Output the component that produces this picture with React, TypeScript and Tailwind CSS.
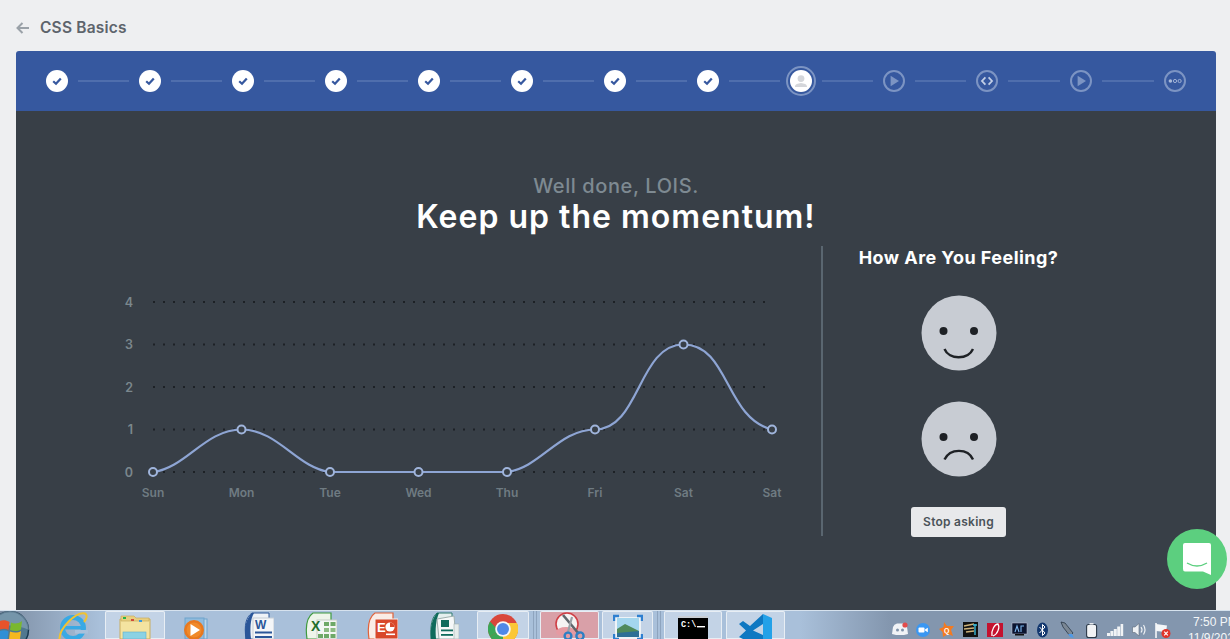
import React from "react";

const font = "font-['Inter','Liberation_Sans',sans-serif]";

function Check() {
  return (
    <div className="w-[22px] h-[22px] rounded-full bg-white flex items-center justify-center shrink-0">
      <svg width="12" height="12" viewBox="0 0 12 12">
        <path d="M2.2 6.2 L5 8.8 L9.8 3.4" fill="none" stroke="#36589f" strokeWidth="2.2" />
      </svg>
    </div>
  );
}

function Outline({ children }: { children: React.ReactNode }) {
  return (
    <div className="w-[22px] h-[22px] rounded-full border-2 border-[#7c94c3] flex items-center justify-center shrink-0">
      <svg width="18" height="18" viewBox="0 0 18 18">{children}</svg>
    </div>
  );
}

function Line() {
  return <div className="w-[51px] shrink-0 h-[2px] mx-[10px] bg-[#4f6ead]" />;
}

function FlexLine() {
  return <div className="flex-1 h-[2px] mx-[10px] bg-[#4f6ead]" />;
}

function Stepper() {
  return (
    <div className="h-[60px] bg-[#36589f] rounded-t-[3px] px-[30px] flex items-center">
      {Array.from({ length: 8 }).map((_, i) => (
        <React.Fragment key={i}>
          <Check />
          <Line />
        </React.Fragment>
      ))}
      <div className="relative w-[22px] h-[22px] rounded-full bg-white flex items-center justify-center shrink-0 outline-2 outline-offset-[2px] outline-[#7c94c3]">
        <svg width="16" height="16" viewBox="0 0 16 16">
          <circle cx="8" cy="5.6" r="3.4" fill="#d4d6da" />
          <path d="M2 14 C2 10.6 5 10.6 8 10 C11 10.6 14 10.6 14 14 Z" fill="#d4d6da" />
        </svg>
      </div>
      <Line />
      <Outline>
        <path d="M5.6 3.8 L14 9 L5.6 14.2 Z" fill="#7c94c3" />
      </Outline>
      <Line />
      <Outline>
        <path d="M7.4 5.4 L4 9 L7.4 12.6 M10.6 5.4 L14 9 L10.6 12.6" fill="none" stroke="#c3cfe6" strokeWidth="1.8" />
      </Outline>
      <FlexLine />
      <Outline>
        <path d="M5.6 3.8 L14 9 L5.6 14.2 Z" fill="#7c94c3" />
      </Outline>
      <FlexLine />
      <Outline>
        <circle cx="4.4" cy="9" r="1.8" fill="#a9b9d9" />
        <circle cx="9" cy="9" r="1.6" fill="none" stroke="#a9b9d9" strokeWidth="0.9" />
        <circle cx="13.6" cy="9" r="1.6" fill="none" stroke="#a9b9d9" strokeWidth="0.9" />
      </Outline>
    </div>
  );
}

const xs = [153, 241.5, 330, 418.5, 507, 595, 683.5, 772];
const ys = [472, 429.5, 472, 472, 472, 429.5, 344.5, 429.5];
const days = ["Sun", "Mon", "Tue", "Wed", "Thu", "Fri", "Sat", "Sat"];

function Chart() {
  const ox = 112;
  const oy = 282;
  const grid = [302, 344.5, 387, 429.5, 472];
  return (
    <svg width="689" height="230" viewBox={`${ox} ${oy} 689 230`} className="block">
      {grid.map((y) => (
        <line key={y} x1="153" x2="767" y1={y} y2={y} stroke="#1d2126" strokeWidth="2" strokeDasharray="2 8" />
      ))}
      {[4, 3, 2, 1, 0].map((n, i) => (
        <text key={n} x="133" y={grid[i] + 4.5} textAnchor="end" fontSize="12.5" fontWeight="600" fill="#7b878d">
          {n}
        </text>
      ))}
      {days.map((d, i) => (
        <text key={i} x={xs[i]} y="497" textAnchor="middle" fontSize="12" fontWeight="600" fill="#6f7b82">
          {d}
        </text>
      ))}
      <path
        d="M153 472 C 186 468 205 429.5 241.5 429.5 C 278 429.5 297 468 330 472 L 507 472 C 540 468 559 429.5 595 429.5 C 640 429.5 638 344.5 683.5 344.5 C 729 344.5 725 418 772 429.5"
        fill="none"
        stroke="#8ea5d4"
        strokeWidth="2.2"
      />
      {xs.map((x, i) => (
        <circle key={i} cx={x} cy={ys[i]} r="4" fill="#383f47" stroke="#a0b5dc" strokeWidth="2" />
      ))}
    </svg>
  );
}

function Face({ happy }: { happy: boolean }) {
  return (
    <svg width="76" height="76" viewBox="0 0 76 76" className="block">
      <circle cx="38" cy="38" r="37.5" fill="#c8ccd3" />
      <circle cx="22.5" cy="36" r="4" fill="#1e2125" />
      <circle cx="53" cy="36" r="4" fill="#1e2125" />
      {happy ? (
        <path d="M23.5 54 C 28 65 47 65 52 54" fill="none" stroke="#1e2125" strokeWidth="2.4" />
      ) : (
        <path d="M23.5 58.5 C 29 47 47 47 52 58.5" fill="none" stroke="#1e2125" strokeWidth="2.4" />
      )}
    </svg>
  );
}

function Feeling() {
  return (
    <div className="w-[269px] pt-[1px] flex flex-col items-center">
      <h2 className="text-[18px] leading-[22px] font-bold text-white whitespace-nowrap tracking-[0.45px]">How Are You Feeling?</h2>
      <div className="mt-[26px] flex flex-col items-center gap-[30px]">
        <Face happy />
        <Face happy={false} />
      </div>
      <button className="mt-[30px] w-[95px] h-[30px] bg-[#e8e9eb] rounded-[3px] text-[12px] font-semibold tracking-[0.25px] text-[#4b5359]">
        Stop asking
      </button>
    </div>
  );
}

/* Taskbar icons: in every icon, y = 0 is page y 611 */

function Start() {
  return (
    <svg width="30" height="28" viewBox="0 0 30 28" className="block">
      <circle cx="10" cy="19" r="18.5" fill="#50788f" stroke="#17384f" strokeWidth="1.4" />
      <path d="M-9 19 A19 19 0 0 1 29 19 Q10 10 -9 19 Z" fill="#8ea9bd" opacity="0.6" />
      <path d="M0 10 C3 9 6 9 9.5 11 L8.5 19 C6 17.5 3 17.5 0 18.5 Z" fill="#e8532b" />
      <path d="M11 11.5 C14 13 18 13 22 10 L21 18.5 C18 20.5 14 20.5 10 19 Z" fill="#7ab82f" />
      <path d="M0 20 C3 19 6 19 8.5 20.5 L7.5 28 L0 28 Z" fill="#2e8fd6" />
      <path d="M10 20.5 C14 22 18 22 21 20 L20 28 L9 28 Z" fill="#f5b81f" />
    </svg>
  );
}

function IE() {
  return (
    <svg width="30" height="28" viewBox="0 0 30 28" className="block">
      <circle cx="15" cy="17" r="10.5" fill="none" stroke="#39a9e4" strokeWidth="5" />
      <rect x="5" y="15" width="21" height="3.4" fill="#39a9e4" />
      <rect x="17" y="19" width="13" height="3.6" fill="#a9c0da" />
      <path d="M1.5 28 C 1 18 18 0 27 2.5 C 30 4 28.5 8 26 11" fill="none" stroke="#f1c232" strokeWidth="2" />
    </svg>
  );
}

function Folder() {
  return (
    <svg width="32" height="28" viewBox="0 0 32 28" className="block">
      <path d="M1 8 L1 28 L31 28 L31 8 Z" fill="#f4e3a0" stroke="#c9ad60" />
      <path d="M2 5 L15 5 L17 7 L30 7 L30 10 L2 10 Z" fill="#e8cf80" stroke="#c9ad60" strokeWidth="0.7" />
      <rect x="4" y="6" width="3" height="2" fill="#27b34b" />
      <rect x="12" y="8" width="3" height="2" fill="#d24a3a" />
      <rect x="20" y="9" width="3" height="2" fill="#3b9ae0" />
      <rect x="4" y="21" width="23" height="7" fill="#8bd2e4" stroke="#5fb0cc" strokeWidth="0.6" />
    </svg>
  );
}

function Media() {
  return (
    <svg width="25" height="28" viewBox="0 0 25 28" className="block">
      <rect x="7" y="8" width="17" height="20" fill="#bcd6ea" stroke="#6fa3cc" />
      <rect x="2" y="7" width="19" height="21" fill="#8fbbdd" stroke="#6fa3cc" />
      <circle cx="11" cy="19" r="10" fill="#e8781e" />
      <circle cx="11" cy="19" r="7.5" fill="#f08a2a" />
      <path d="M7.5 13 L17 19 L7.5 25 Z" fill="#fff" />
    </svg>
  );
}

function Word() {
  return (
    <svg width="30" height="28" viewBox="0 0 30 28" className="block">
      <path d="M2 28 C0 14 2 6 8 2 L25 2 L25 28 Z" fill="#eef2f7" stroke="#2a5699" strokeWidth="1" />
      <path d="M1.5 28 C0 16 2 8 8 2 L10 2 C6 9 6 18 7 28 Z" fill="#2a5699" />
      <rect x="9" y="7" width="21" height="21" fill="#f4f6f8" stroke="#c5cdd5" />
      <text x="11" y="18" fontSize="12" fontWeight="800" fill="#2a5699" fontFamily="Liberation Sans">W</text>
      <rect x="11" y="20.5" width="17" height="2" fill="#2a5699" />
      <rect x="11" y="25" width="17" height="2" fill="#2a5699" />
    </svg>
  );
}

function Excel() {
  return (
    <svg width="32" height="28" viewBox="0 0 32 28" className="block">
      <path d="M2 28 C0 14 2 6 8 2 L26 2 L26 28 Z" fill="#eef5ea" stroke="#3f9a3f" strokeWidth="1.2" />
      <rect x="12" y="9" width="20" height="19" fill="#f4f6f4" stroke="#c5cdc5" />
      <text x="6" y="20" fontSize="14" fontWeight="800" fill="#1f6e2d" fontFamily="Liberation Sans">X</text>
      <rect x="19" y="11" width="5" height="4" fill="#6ea867" />
      <rect x="25.5" y="11" width="5" height="4" fill="#6ea867" />
      <rect x="19" y="17" width="5" height="4" fill="#8dbb83" />
      <rect x="25.5" y="17" width="5" height="4" fill="#8dbb83" />
      <rect x="13" y="23" width="5" height="4" fill="#6ea867" />
      <rect x="19" y="23" width="5" height="4" fill="#6ea867" />
      <rect x="25.5" y="23" width="5" height="4" fill="#6ea867" />
    </svg>
  );
}

function Ppt() {
  return (
    <svg width="31" height="28" viewBox="0 0 31 28" className="block">
      <path d="M2 28 C0 14 2 6 8 2 L26 2 L26 28 Z" fill="#faece6" stroke="#e0623a" strokeWidth="1.2" />
      <rect x="8" y="8" width="23" height="20" fill="#d9482a" stroke="#f4f0ee" />
      <text x="10" y="21" fontSize="13" fontWeight="800" fill="#fff" fontFamily="Liberation Sans">E</text>
      <circle cx="23" cy="16" r="4.6" fill="#fff" />
      <path d="M23 16 L23 11.4 A4.6 4.6 0 0 1 27.6 16 Z" fill="#d9482a" />
      <rect x="19" y="22.5" width="9" height="1.6" fill="#fff" />
    </svg>
  );
}

function Pub() {
  return (
    <svg width="29" height="28" viewBox="0 0 29 28" className="block">
      <path d="M1 28 C0 14 2 6 7 2 L22 2 L22 28 Z" fill="#e5efee" stroke="#2f7a6e" strokeWidth="1" />
      <path d="M1 28 C0 16 2 8 7 2 L9 2 C6 9 5 18 6 28 Z" fill="#0f6b5c" />
      <path d="M7 8 L24 5 L26 28 L9 28 Z" fill="#f6f8f8" stroke="#9fb0ae" />
      <rect x="11" y="9" width="8" height="7" fill="#0f6b5c" />
      <rect x="11" y="18.5" width="12" height="1.8" fill="#0f6b5c" />
      <rect x="11" y="23" width="12" height="1.8" fill="#0f6b5c" />
      <rect x="24" y="13" width="5" height="15" fill="#e6eceb" stroke="#9fb0ae" strokeWidth="0.6" />
    </svg>
  );
}

function Chrome() {
  return (
    <svg width="30" height="28" viewBox="0 0 30 28" className="block">
      <circle cx="15" cy="18" r="15" fill="#d9473b" />
      <path d="M15 18 L2 25.5 A15 15 0 0 1 2 10.5 L9 18 Z" fill="#3aa757" />
      <path d="M15 18 L2 25.5 A15 15 0 0 0 15 33 Z" fill="#3aa757" />
      <path d="M15 18 L15 33 A15 15 0 0 0 29 12 L15 12 Z" fill="#fbc735" />
      <circle cx="15" cy="18" r="7.8" fill="#f4f6f8" />
      <circle cx="15" cy="18" r="6" fill="#4e89e8" />
    </svg>
  );
}

function Snip() {
  return (
    <svg width="30" height="28" viewBox="0 0 30 28" className="block">
      <ellipse cx="12" cy="13" rx="11" ry="11" fill="#f5f3f3" stroke="#cf3f46" strokeWidth="1.6" />
      <ellipse cx="11" cy="21" rx="10" ry="5" fill="#e59aa2" />
      <path d="M8 4 L24 23" stroke="#5f656b" strokeWidth="2.6" />
      <path d="M17 6 L13 21" stroke="#9aa0a6" strokeWidth="2.2" />
      <circle cx="25" cy="25" r="3.6" fill="none" stroke="#2d7fc4" strokeWidth="2.4" />
      <circle cx="13" cy="25" r="3.4" fill="none" stroke="#2d7fc4" strokeWidth="2.4" />
    </svg>
  );
}

function Pics() {
  return (
    <svg width="30" height="28" viewBox="0 0 30 28" className="block">
      <rect x="2" y="6" width="26" height="22" fill="#eef3f7" />
      <rect x="4" y="7" width="22" height="19" fill="#a4d6ee" />
      <path d="M4 18 L12 13 L26 20 L26 26 L4 26 Z" fill="#4f8a5b" />
      <path d="M4 22 L26 20 L26 26 L4 26 Z" fill="#2d6f96" />
      <path d="M1 10 L1 5 L6 5 M24 5 L29 5 L29 10 M1 23 L1 28 L6 28 M24 28 L29 28 L29 23" fill="none" stroke="#2e7fd0" strokeWidth="2.4" />
    </svg>
  );
}

function Cmd() {
  return (
    <svg width="30" height="28" viewBox="0 0 30 28" className="block">
      <rect x="0" y="5" width="30" height="23" fill="#000" />
      <rect x="0" y="5" width="30" height="2" fill="#c9ced4" />
      <text x="3" y="16" fontSize="8.5" fontWeight="700" fill="#fff" fontFamily="Liberation Mono">C:\</text>
      <rect x="19" y="15" width="8" height="1.4" fill="#fff" />
    </svg>
  );
}

function VSCode() {
  return (
    <svg width="33" height="28" viewBox="0 0 33 28" className="block">
      <path d="M24 3 L33 7 L33 28 L24 28 Z" fill="#23a1e8" />
      <path d="M24 3 L11 15 L4 10 L0 13 L7 19.5 L0 26 L4 28 L24 28 L24 24 L14 19.5 L24 13 Z" fill="#0e78c2" />
    </svg>
  );
}

type TbItem = { w: number; ml: number; active?: boolean; red?: boolean; sep?: boolean; icon: React.ReactNode };

const items: TbItem[] = [
  { w: 30, ml: 0, icon: <Start /> },
  { w: 30, ml: 28, icon: <IE /> },
  { w: 60, ml: 17, active: true, icon: <Folder /> },
  { w: 25, ml: 18, icon: <Media /> },
  { w: 30, ml: 36, icon: <Word /> },
  { w: 32, ml: 31, icon: <Excel /> },
  { w: 31, ml: 30, icon: <Ppt /> },
  { w: 29, ml: 32, icon: <Pub /> },
  { w: 52, ml: 18, active: true, icon: <Chrome /> },
  { w: 59, ml: 11, active: true, red: true, sep: true, icon: <Snip /> },
  { w: 51, ml: 3, active: true, icon: <Pics /> },
  { w: 58, ml: 11, active: true, sep: true, icon: <Cmd /> },
  { w: 59, ml: 4, active: true, icon: <VSCode /> },
];

/* Tray: x = page x - 890, y = page y - 611 */
function Tray() {
  return (
    <div className="ml-auto flex items-start h-full">
      <svg width="292" height="28" viewBox="0 0 292 28" className="block shrink-0">
        <g transform="translate(2 12)">
          <path d="M1 4 Q2 1 5 0.5 L11 0.5 Q14 1 15 4 L16 11 L12 12 L4 12 L0 11 Z" fill="#f1f3f6" />
          <circle cx="5.5" cy="7" r="1.5" fill="#7f92a9" />
          <circle cx="10.5" cy="7" r="1.5" fill="#7f92a9" />
          <circle cx="13" cy="2" r="2.6" fill="#e34c4c" />
        </g>
        <g transform="translate(26 12)">
          <circle cx="7" cy="7" r="7" fill="#3a97f2" />
          <rect x="2.5" y="4.5" width="6" height="5" rx="1" fill="#fff" />
          <path d="M9 6.5 L11.8 4.8 L11.8 9.2 L9 7.5 Z" fill="#fff" />
        </g>
        <g transform="translate(49 11)">
          <path d="M5 0 L8 4 L15 4 L12 8 L14 14 L9 12 L4 15 L3.5 10 L0 7 L4.5 5 Z" fill="#f47a20" />
          <text x="5" y="10.5" fontSize="7" fontWeight="700" fill="#fff" fontFamily="Liberation Sans">Q</text>
        </g>
        <g transform="translate(73 11)">
          <rect x="0" y="0" width="15" height="15" fill="#111" />
          <path d="M1 4 L11 2 M1 7 L11 6 M3 10 L11 9" stroke="#cdb27a" strokeWidth="1.4" />
          <path d="M12 2 L12 13 M10 3 L14 3" stroke="#37b6d6" strokeWidth="1.4" />
        </g>
        <g transform="translate(97 12)">
          <rect x="0" y="0" width="16" height="14" fill="#c4122f" />
          <path d="M5 13 C4 7 8 1 11 1 C13 4 11 11 6 13" fill="none" stroke="#fff" strokeWidth="1.3" />
        </g>
        <g transform="translate(122 12)">
          <rect x="0" y="0" width="15" height="11" fill="#0b1430" stroke="#ccd" strokeWidth="0.5" />
          <path d="M3 9 L5 3 L7 9 M9 9 L9 3 L12 3" stroke="#7fb7ef" strokeWidth="1.1" fill="none" />
          <rect x="3" y="11" width="9" height="1.5" fill="#111" />
        </g>
        <g transform="translate(147 12)">
          <ellipse cx="5.5" cy="7" rx="5.5" ry="7.5" fill="#13386f" />
          <path d="M2.5 4 L8 10 L5.5 12.5 L5.5 1.5 L8 4 L2.5 10" fill="none" stroke="#fff" strokeWidth="1" />
        </g>
        <g transform="translate(170 11)">
          <path d="M1 0 L5 1 L13 11 L10 14 L3 5 Z" fill="#7b8794" stroke="#1d2b3a" strokeWidth="0.7" />
          <path d="M8 12 L12 12 L14 16 L10 15 Z" fill="#4f9ae8" />
        </g>
        <g transform="translate(196 12)">
          <rect x="0.6" y="1.5" width="10" height="13" rx="2" fill="#f1f3f5" stroke="#2b3948" strokeWidth="1.1" />
          <rect x="3.5" y="0" width="4" height="1.6" fill="#e8ecf0" />
        </g>
        <g transform="translate(217 13)" fill="#f1f3f5">
          <rect x="0" y="9" width="3" height="3" />
          <rect x="3.4" y="7" width="3" height="5" />
          <rect x="6.8" y="5" width="3" height="7" />
          <rect x="10.2" y="2.5" width="3" height="9.5" />
          <rect x="13.6" y="0" width="2.6" height="12" />
        </g>
        <g transform="translate(242 12)">
          <path d="M0.5 4 L3 4 L7 0.5 L7 13 L3 9.5 L0.5 9.5 Z" fill="#eef1f4" stroke="#5d6a78" strokeWidth="0.6" />
          <path d="M9 4 Q11 6.7 9 9.5 M11.5 2 Q14.5 6.7 11.5 11.5" stroke="#eef1f4" strokeWidth="1.2" fill="none" />
        </g>
        <g transform="translate(265 12)">
          <path d="M1 0 L1 15" stroke="#f4f6f8" strokeWidth="1.6" />
          <path d="M1 1 L12 2.5 L11 9 L1 8 Z" fill="#f4f6f8" />
          <circle cx="11" cy="10.5" r="4.5" fill="#e0332b" />
          <path d="M9.2 8.7 L12.8 12.3 M12.8 8.7 L9.2 12.3" stroke="#fff" strokeWidth="1.2" />
        </g>
      </svg>
      <div className="w-[48px] relative h-full overflow-hidden text-[12px] leading-[16px] text-[#f4f6f8] font-['Liberation_Sans',sans-serif] whitespace-nowrap">
        <div className="pl-[11px] pt-[3px]">7:50 PM</div>
        <div className="pl-[6px]">11/9/2021</div>
      </div>
    </div>
  );
}

function Taskbar() {
  return (
    <div className="h-[29px] shrink-0 border-t border-[#d6e2ee] bg-[linear-gradient(90deg,#7d8ea4_0px,#a9c0da_100px,#a9c0da_800px,#8396ae_890px,#8396ae_100%)] flex items-start overflow-hidden">
      {items.map((it, i) => (
        <React.Fragment key={i}>
          {it.sep ? (
            <div style={{ width: it.ml }} className="h-[28px] shrink-0 flex justify-center">
              <div className="w-[4px] h-full border-x border-[#8ea4be]" />
            </div>
          ) : null}
          <div
            style={{ width: it.w, marginLeft: it.sep ? 0 : it.ml }}
            className={
              "h-[28px] shrink-0 flex justify-center overflow-hidden " +
              (it.red
                ? "bg-[#d9a0a8] rounded-t-[2px] shadow-[inset_0_0_0_1px_#e8eef4]"
                : it.active
                  ? "bg-[#c3d3e6] rounded-t-[2px] shadow-[inset_0_0_0_1px_#e8eef4]"
                  : "")
            }
          >
            {it.icon}
          </div>
        </React.Fragment>
      ))}
      <Tray />
    </div>
  );
}

export default function App() {
  return (
    <div className={`${font} relative w-[1230px] h-[639px] overflow-hidden bg-[#eeeff1] flex flex-col`}>
      <div className="h-[51px] shrink-0 flex items-center pl-[16px] pt-[4px]">
        <svg width="13" height="12" viewBox="0 0 13 12">
          <path d="M6.5 1 L1.5 6 L6.5 11 M1.5 6 L13 6" fill="none" stroke="#9aa1a8" strokeWidth="2" />
        </svg>
        <span className="ml-[11px] text-[15.5px] font-semibold tracking-[0.2px] text-[#5d646c]">CSS Basics</span>
      </div>
      <main className="ml-[16px] mr-[14px] flex-1 min-h-0 flex flex-col">
        <Stepper />
        <div className="flex-1 bg-[#383f47] flex flex-col">
          <div className="pt-[63px] text-center">
            <p className="text-[20px] leading-[24px] font-medium tracking-[0.6px] text-[#7e8a92]">Well done, LOIS.</p>
            <h1 className="text-[32px] leading-[38px] font-semibold tracking-[1px] text-white">Keep up the momentum!</h1>
          </div>
          <div className="mt-[10px] flex items-start">
            <div className="pl-[96px] pt-[36px] w-[806px] shrink-0">
              <Chart />
            </div>
            <div className="w-[2px] h-[290px] bg-[#5a6670] shrink-0 -ml-[1px]" />
            <div className="pl-[1px]">
              <Feeling />
            </div>
          </div>
        </div>
      </main>
      <Taskbar />
      <button className="absolute left-[1167px] top-[529px] w-[60px] h-[60px] rounded-full bg-[#5ccf7f] flex items-center justify-center">
        <svg width="28" height="32" viewBox="0 0 28 32">
          <path d="M2 0 H26 Q28 0 28 2 V32 L20 28.5 H2 Q0 28.5 0 26 V2 Q0 0 2 0 Z" fill="#fff" />
          <path d="M4 20 Q14 26 24 20" fill="none" stroke="#5ccf7f" strokeWidth="1.4" />
        </svg>
      </button>
    </div>
  );
}
